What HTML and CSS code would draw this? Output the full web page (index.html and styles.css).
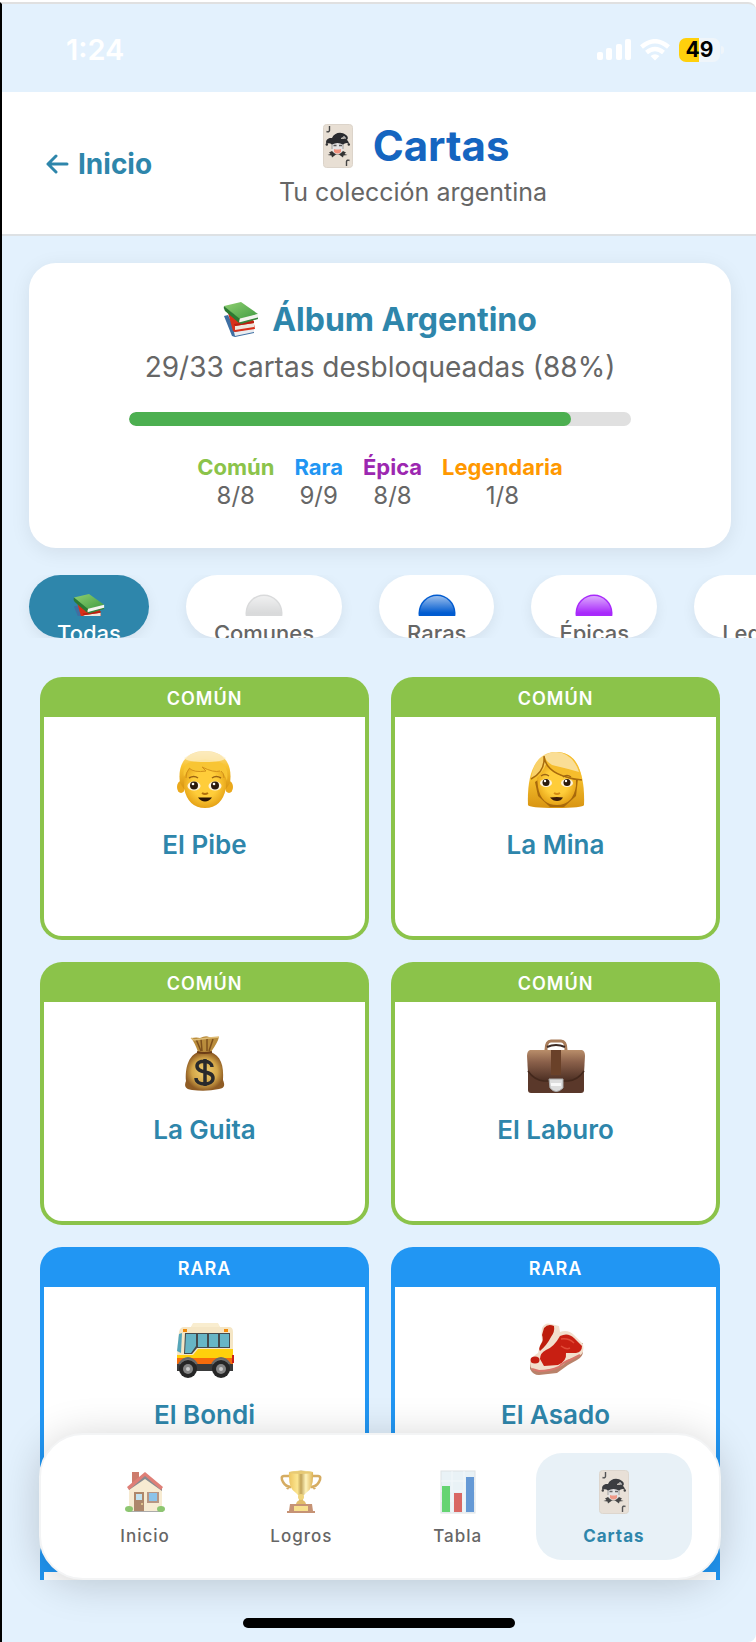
FILE: index.html
```html
<!DOCTYPE html>
<html lang="es">
<head>
    <meta charset="UTF-8">
    <meta name="viewport" content="width=device-width, initial-scale=1.0">
    <title>Cartas</title>
    <link rel="stylesheet" href="styles.css">
</head>
<body>
    <!-- iconos compartidos -->
    <svg class="sprite" aria-hidden="true">
        <defs>
            <linearGradient id="bookGreen" x1="0" y1="0" x2="1" y2="1">
                <stop offset="0" stop-color="#8fd070"/><stop offset="1" stop-color="#3f9a42"/>
            </linearGradient>
            <linearGradient id="dome" x1="0" y1="0" x2="0" y2="1">
                <stop offset="0" stop-color="#fff" stop-opacity=".6"/><stop offset=".5" stop-color="#fff" stop-opacity="0"/>
            </linearGradient>
        </defs>
        <symbol id="joker" viewBox="0 0 30 44">
            <rect x=".5" y=".5" width="29" height="43" rx="3" fill="#e8dfd4" stroke="#dcd4ca"/>
            <path d="M6.500 2v4.500q-.5 2-3 1" fill="none" stroke="#444" stroke-width="1.400"/>
            <path d="M23.500 42v-4.500q.5-2 3-1" fill="none" stroke="#444" stroke-width="1.400"/>
            <path d="M9 18h11v7q-1 5-5.500 5T9 25z" fill="#e4e2e3"/>
            <path d="M9 19v6M20 19v6" stroke="#999"/>
            <path d="M10.500 21.500h3M16 21.500h3" stroke="#555" stroke-width="1.300"/>
            <path d="M11 25q3.500 1 7 0v3q-3.500 3-7 0z" fill="#f0907c"/>
            <path d="M3.500 20C2 16 5 13.500 9 14c2-5 9-7 14-3 3 2 2 5.500-.5 5-1-.5-.5-2-1.500-2.500-2-.5-3 .5-3 1.500 5-1 8 2 8 5-2-1.500-4-1-6 .5q-5.500-3-11 0c-2-1.500-4-1.500-5.500-.5z" fill="#292a2e"/>
            <path d="M20.500 12.500q2 .5 2 2" stroke="#eee" fill="none"/>
            <circle cx="3.800" cy="20.500" r="1.200" fill="#333"/><circle cx="25.800" cy="20.500" r="1.200" fill="#333"/>
            <path d="M9 27l2 2q3.500 2.500 7 0l2-2 3 1.500-1.500 1.500 3 1-4 .5-.5 2-4-3h-3l-4 3-.5-2-4-.5 3-1L6 28.500z" fill="#333"/>
        </symbol>
        <symbol id="books" viewBox="0 0 36 36">
            <path d="M1 14l4-1 8 16 18-3v5l-19 4-3-1z" fill="#3e6fa3"/>
            <path d="M11 30l20-4v4l-19 4z" fill="#e9edf1"/>
            <path d="M5 11l9 5 16 1 2 10-20 3-2-1z" fill="#d9301a"/>
            <path d="M12 24l19-3v4l-19 3z" fill="#efe6dc"/>
            <path d="M11 22l20-3v2l-19 3z" fill="#b91f10"/>
            <path d="M1 4l17-4 17 12-18 6z" fill="url(#bookGreen)"/>
            <path d="M1 4l16 13-1 4L2 9Q0 6 1 4z" fill="#2c7a31"/>
            <path d="M17 16.500q-1.500 3 0 4.500l18-5v-4z" fill="#f4f4f0"/>
            <path d="M16 20.500l19-5v1.500l-17 5z" fill="#33853a"/>
        </symbol>
    </svg>

    <div class="screen">
        <div class="status-bar">
            <span class="time">1:24</span>
            <div class="status-icons">
                <svg width="34" height="22" viewBox="0 0 34 22" fill="#fff">
                    <rect x="0" y="13" width="6" height="8" rx="2"/>
                    <rect x="9" y="9" width="6" height="12" rx="2"/>
                    <rect x="19" y="5" width="6" height="16" rx="2"/>
                    <rect x="28" y="0" width="6" height="21" rx="2"/>
                </svg>
                <svg width="30" height="22" viewBox="0 0 30 22" fill="none" stroke="#fff" stroke-width="4.500">
                    <path d="M1.500 8q13.500-11.500 27 0"/>
                    <path d="M6.500 13.500q8.500-7 17 0"/>
                    <path d="M10.500 17q4.500-3.500 9 0L15 21.500z" fill="#fff" stroke="none"/>
                </svg>
                <div class="battery">49</div>
            </div>
        </div>

        <header class="page-header">
            <a class="back" href="#">
                <svg width="23" height="20" viewBox="0 0 23 20" fill="none" stroke="currentColor" stroke-width="3" stroke-linecap="round" stroke-linejoin="round">
                    <path d="M21 10H2M10 2L2 10l8 8"/>
                </svg>
                Inicio
            </a>
            <div class="page-title">
                <h1><svg width="42" height="44"><use href="#joker"/></svg>Cartas</h1>
                <p>Tu colección argentina</p>
            </div>
        </header>

        <div class="content">
            <main class="scroll">
                <section class="album">
                    <h2><svg width="36" height="36"><use href="#books"/></svg>Álbum Argentino</h2>
                    <p class="album-count">29/33 cartas desbloqueadas (88%)</p>
                    <div class="progress"><div class="progress-fill" style="width: 88%"></div></div>
                    <ul class="stats">
                        <li><b class="t-comun">Común</b>8/8</li>
                        <li><b class="t-rara">Rara</b>9/9</li>
                        <li><b class="t-epica">Épica</b>8/8</li>
                        <li><b class="t-legendaria">Legendaria</b>1/8</li>
                    </ul>
                </section>

                <div class="filters">
                    <button class="filter active" type="button">
                        <span class="filter-icon"><svg width="32" height="32"><use href="#books"/></svg></span>Todas
                    </button>
                    <button class="filter" type="button">
                        <span class="filter-icon"><svg width="38" height="38" viewBox="0 0 38 38"><circle cx="19" cy="19" r="18.500" fill="#d9dadb"/><circle cx="19" cy="19" r="17" fill="url(#dome)"/></svg></span>Comunes
                    </button>
                    <button class="filter" type="button">
                        <span class="filter-icon"><svg width="38" height="38" viewBox="0 0 38 38"><circle cx="19" cy="19" r="18.500" fill="#005bd0"/><circle cx="19" cy="19" r="17" fill="url(#dome)"/></svg></span>Raras
                    </button>
                    <button class="filter" type="button">
                        <span class="filter-icon"><svg width="38" height="38" viewBox="0 0 38 38"><circle cx="19" cy="19" r="18.500" fill="#a829fb"/><circle cx="19" cy="19" r="17" fill="url(#dome)"/></svg></span>Épicas
                    </button>
                    <button class="filter" type="button">
                        <span class="filter-icon"><svg width="38" height="38" viewBox="0 0 38 38"><circle cx="19" cy="19" r="18.500" fill="#f5b50a"/><circle cx="19" cy="19" r="17" fill="url(#dome)"/></svg></span>Legendarias
                    </button>
                </div>

                <div class="cards">
                    <article class="card">
                        <div class="rarity">COMÚN</div>
                        <div class="card-body">
                            <svg class="card-icon" viewBox="0 0 58 58">
                                <defs>
                                    <radialGradient id="skin" cx=".5" cy=".45" r=".6"><stop offset=".5" stop-color="#ffcd3a"/><stop offset="1" stop-color="#e09a10"/></radialGradient>
                                    <linearGradient id="hair" x1="0" y1="0" x2="0" y2="1"><stop offset="0" stop-color="#f7dd98"/><stop offset=".4" stop-color="#f9c430"/><stop offset="1" stop-color="#d89412"/></linearGradient>
                                </defs>
                                <ellipse cx="5" cy="37" rx="4" ry="6" fill="#eba91c"/><ellipse cx="53" cy="37" rx="4" ry="6" fill="#eba91c"/>
                                <path d="M4 33C1 13 11 1 29 1s28 12 25 32l-4 6H8z" fill="url(#hair)"/>
                                <path d="M8 24Q10 12 29 14q19-2 21 10v14Q46 58 29 58T8 38z" fill="url(#skin)"/>
                                <path d="M8 27q2-4 5-9 5 5 17 3l-4-4q12 6 18 4 5 3 7 10 2-13-5-18-17-7-34 0-6 5-4 14z" fill="#f8c534"/>
                                <path d="M13 18q5 5 17 3l-4-4q12 6 18 4M10 28q0-6 3-9M48 28q0-5-3-7" fill="none" stroke="#d3921a"/>
                                <path d="M8 8Q29-6 50 8q-3 4-21 4T8 8z" fill="#fdf1cf" opacity=".7"/>
                                <path d="M13 28q5-3 9 0M36 28q4-3 9 0" fill="none" stroke="#9c6514" stroke-width="1.500"/>
                                <ellipse cx="18" cy="36" rx="6.500" ry="4.500" fill="#fff3dc"/><ellipse cx="39" cy="36" rx="6.500" ry="4.500" fill="#fff3dc"/>
                                <circle cx="18" cy="35.500" r="4" fill="#2b1a0b"/><circle cx="39" cy="35.500" r="4" fill="#2b1a0b"/>
                                <circle cx="17" cy="34" r="1.300" fill="#fff"/><circle cx="38" cy="34" r="1.300" fill="#fff"/>
                                <path d="M26 43q3 2 6 0" fill="none" stroke="#b06f0c" stroke-width="2"/>
                                <path d="M22 47.500h14q-3 4-7 4t-7-4z" fill="#2a1405"/>
                            </svg>
                            <h3>El Pibe</h3>
                        </div>
                    </article>
                    <article class="card">
                        <div class="rarity">COMÚN</div>
                        <div class="card-body">
                            <svg class="card-icon" viewBox="0 0 58 58">
                                <path d="M1 55C0 30 5 2 29 2s29 28 28 53q-1 3-28 3T1 55z" fill="url(#hair)"/>
                                <path d="M8 32l3 14 12 11h14l12-11 2-17-22-12z" fill="#a8690b"/>
                                <path d="M10 28Q16 22 19 14q9 12 30 16v6Q46 55 30 55T11 37z" fill="url(#skin)"/>
                                <path d="M17 6q1 20 38 24Q51 2 29 2 22 2 17 6z" fill="#f6bd2c"/>
                                <path d="M17 6q4 9 12 10 13 3 23 6Q46 3 29 2 22 2 17 6z" fill="#fbe9ba" opacity=".75"/>
                                <path d="M17 6q1 17-13 23Q7 10 17 6z" fill="#f9d168"/>
                                <path d="M17 6q2 20 38 24M17 7q1 15-13 22" fill="none" stroke="#a96b0c" stroke-width="1.500"/>
                                <path d="M14 26q4-3 8 0M36 27q4-3 8 0" fill="none" stroke="#9c6514" stroke-width="1.300"/>
                                <ellipse cx="19" cy="33" rx="6" ry="4" fill="#fff3dc"/><ellipse cx="40" cy="33" rx="6" ry="4" fill="#fff3dc"/>
                                <circle cx="19" cy="32.500" r="3.500" fill="#2b1a0b"/><circle cx="40" cy="32.500" r="3.500" fill="#2b1a0b"/>
                                <circle cx="18" cy="31" r="1.200" fill="#fff"/><circle cx="39" cy="31" r="1.200" fill="#fff"/>
                                <path d="M27 43q3 2 6 0" fill="none" stroke="#d48b13" stroke-width="2"/>
                                <path d="M23 47.500q7-1 13 0-2 3.500-6 3.500t-7-3.500z" fill="#3d1c08"/>
                            </svg>
                            <h3>La Mina</h3>
                        </div>
                    </article>
                    <article class="card">
                        <div class="rarity">COMÚN</div>
                        <div class="card-body">
                            <svg class="card-icon" viewBox="0 0 58 58">
                                <defs><radialGradient id="bag"><stop offset="0" stop-color="#f1d070"/><stop offset=".65" stop-color="#d3a649"/><stop offset="1" stop-color="#8f5c24"/></radialGradient></defs>
                                <path d="M23 17C12 20 9 34 10 46c-2 5-1 8 6 9q14 2 27-1c6-1 6-4 4-9 1-14-2-25-13-28z" fill="url(#bag)"/>
                                <path d="M15 3q6-1 9 0 6-3 9-1 5 1 10 0-1 5-8 15H22Q19 8 15 3z" fill="#b98c3c"/>
                                <path d="M20 4l5 12M25 4l1 12M31 3v13M37 4l-4 12" stroke="#7d501d" stroke-width="1.500"/>
                                <path d="M15 3l3 2 7-1 8-1 10-1" fill="none" stroke="#dfbd78" stroke-width="1.500"/>
                                <path d="M21 17q7 2 15 0" fill="none" stroke="#6b3c16" stroke-width="2"/>
                                <path d="M36 32c0-7-15-8-15-1 0 8 16 4 16 12 0 8-17 8-17 0M29 24v27" fill="none" stroke="#292a2c" stroke-width="3.500"/>
                            </svg>
                            <h3>La Guita</h3>
                        </div>
                    </article>
                    <article class="card">
                        <div class="rarity">COMÚN</div>
                        <div class="card-body">
                            <svg class="card-icon" viewBox="0 0 58 58">
                                <defs><linearGradient id="leather" x1="0" y1="0" x2="0" y2="1"><stop offset="0" stop-color="#b98e6a"/><stop offset=".4" stop-color="#8a604a"/><stop offset="1" stop-color="#4f3125"/></linearGradient></defs>
                                <path d="M19 15q0-9 5-9h10q5 0 5 9" fill="none" stroke="#a87c5a" stroke-width="3"/>
                                <path d="M20 12q9-4 18 0" fill="none" stroke="#3b2a24" stroke-width="2"/>
                                <rect x="1" y="20" width="56" height="38" rx="3" fill="#5a382a"/>
                                <path d="M3 15h52q3 1 3 6l-1 17q-6 6-15 7H16Q7 44 1 38L0 21q0-5 3-6z" fill="url(#leather)"/>
                                <path d="M1 36q6 9 16 10h24q10-1 16-10" fill="none" stroke="#43281c" stroke-width="1.500"/>
                                <rect x="24" y="15" width="10" height="25" fill="#6a4129"/>
                                <path d="M22 44h14v9q-7 7-13 0z" fill="#ddd" stroke="#aaa"/>
                                <path d="M24 48h10v3H24z" fill="#f8f8f8"/>
                            </svg>
                            <h3>El Laburo</h3>
                        </div>
                    </article>
                    <article class="card rara">
                        <div class="rarity">RARA</div>
                        <div class="card-body">
                            <svg class="card-icon" viewBox="0 0 58 58">
                                <path d="M15 7l2-3h25l2 3h9q4 0 4 5v36H1V35L3 12q1-5 5-5z" fill="#f5e6c5"/>
                                <path d="M17 3h25l2 4H15z" fill="#f9edcf"/>
                                <rect x="7" y="9" width="4" height="3" fill="#f18b0a"/><rect x="48" y="9" width="4" height="3" fill="#f18b0a"/>
                                <path d="M3 14l3-1-1 20-4-2z" fill="#55a5b9"/>
                                <path d="M9 13h45v15H21l-5 6H8z" fill="#454a4c"/>
                                <path d="M10 14h10v12l-5 7H9zM22 14h9v13h-9zM33 14h9v13h-9zM44 14h9v13h-9z" fill="#67b5c5"/>
                                <path d="M1 35h16l5-6h35v11H1z" fill="#ffd00c"/>
                                <path d="M1 38h56v6H1z" fill="#f66b0b"/>
                                <path d="M1 44h56v7H1z" fill="#3a3b3c"/>
                                <path d="M3 44q9-12 18 0M36 44q9-12 18 0" fill="#777" stroke="#696969" stroke-width="2"/>
                                <circle cx="12" cy="49" r="9" fill="#262626"/><circle cx="45" cy="49" r="9" fill="#262626"/>
                                <circle cx="12" cy="49" r="5" fill="#858585"/><circle cx="45" cy="49" r="5" fill="#858585"/>
                                <circle cx="12" cy="49" r="2" fill="#ccc"/><circle cx="45" cy="49" r="2" fill="#ccc"/>
                                <path d="M56 35h2v8h-2z" fill="#c8201a"/>
                            </svg>
                            <h3>El Bondi</h3>
                        </div>
                    </article>
                    <article class="card rara">
                        <div class="rarity">RARA</div>
                        <div class="card-body">
                            <svg class="card-icon" viewBox="0 0 58 58">
                                <path d="M3 42l0 7q3 6 9 6l18-2 11-8 9-5q6-3 6-9v-8z" fill="#b9826a"/>
                                <path d="M15 8q3-6 9-4l8 2 1 6q8-3 14 3l9 9q2 9-4 12l-12 4q-5 8-14 9l-14 2q-9 0-9-8 1-6 8-10 2-8 4-12-1-8 0-13z" fill="#f2dfcd"/>
                                <path d="M17 8q4-5 10-2 1 6-3 11-4 8-11 14-2-2 1-7 3-4 1-9z" fill="#bd1d0c"/>
                                <path d="M33 16q8-4 14 2l8 8q0 6-6 7l-10 0q1 8-8 12l-14 1-4-7q0-6 6-9 8-3 14-14z" fill="#c81f12"/>
                                <ellipse cx="8" cy="40" rx="4.500" ry="3.500" fill="#c51e12"/>
                                <path d="M5 49l7 2q11 0 20-4 4-5 11-7l10-5" fill="none" stroke="#d8776c" stroke-width="2"/>
                                <path d="M34 19q8-1 13 4M34 26q5 4 9 2" fill="none" stroke="#e14b38" stroke-width="1.500"/>
                            </svg>
                            <h3>El Asado</h3>
                        </div>
                    </article>
                    <article class="card rara"><div class="rarity">RARA</div><div class="card-body"></div></article>
                    <article class="card rara"><div class="rarity">RARA</div><div class="card-body"></div></article>
                </div>
            </main>

            <nav class="tab-bar">
                <a class="tab" href="#">
                    <svg width="44" height="44" viewBox="0 0 44 44">
                        <path d="M9 2h7v13H9z" fill="#b9462f"/>
                        <path d="M6 17L22 4l17 14v24H6z" fill="#f5e3bf"/>
                        <path d="M6 17L22 5l17 13v3L22 9 6 20z" fill="#565a60"/>
                        <path d="M4 17L22 2l18 15-2 3L22 6 6 20z" fill="#d24a3e"/>
                        <rect x="11" y="22" width="10" height="19" fill="#8b552d"/><rect x="13" y="24" width="6" height="6" fill="#a8d6ea"/><circle cx="19" cy="34" r="1" fill="#e8c66c"/>
                        <rect x="24" y="22" width="12" height="11" fill="#9a6a51"/><rect x="26" y="23" width="8" height="8" fill="#5cabe0"/>
                        <path d="M5 41h35v1H5z" fill="#888"/>
                        <ellipse cx="6" cy="39" rx="4" ry="3" fill="#5daf35"/><ellipse cx="38" cy="39" rx="4" ry="3" fill="#5daf35"/>
                    </svg>
                    Inicio
                </a>
                <a class="tab" href="#">
                    <svg width="44" height="44" viewBox="0 0 44 44">
                        <defs><linearGradient id="gold"><stop offset="0" stop-color="#e5ad20"/><stop offset=".35" stop-color="#fbdc62"/><stop offset=".5" stop-color="#a87c12"/><stop offset=".7" stop-color="#fff0a1"/><stop offset="1" stop-color="#cf930d"/></linearGradient></defs>
                        <path d="M12 6H5q-4 0-1 6 3 5 8 5M32 6h7q4 0 1 6-3 5-8 5M10 16l-2 3M34 16l2 3" fill="none" stroke="#c48a20" stroke-width="2.500"/>
                        <path d="M10 2q12-3 24 0 1 17-7 21l-3 3v8h-4v-8l-3-3Q9 19 10 2z" fill="url(#gold)"/>
                        <ellipse cx="22" cy="2.500" rx="12" ry="1.500" fill="#ddb43c"/>
                        <circle cx="22" cy="27" r="3" fill="#eac344"/>
                        <path d="M17 34q1-4 5-4t5 4z" fill="#d7a22b"/>
                        <path d="M11 34h22l1 7h2v2H8v-2h2z" fill="#af663b"/>
                        <path d="M15 36h14v5H15z" fill="#f4d45d"/>
                    </svg>
                    Logros
                </a>
                <a class="tab" href="#">
                    <svg width="44" height="44" viewBox="0 0 44 44">
                        <rect x="5" y="1" width="34" height="42" fill="#e1edf3" stroke="#d0d7da"/>
                        <path d="M5 11h34M5 21h34M5 31h34M16 1v42M28 1v42" stroke="#edf5f9"/>
                        <rect x="6" y="16" width="8" height="26" fill="#25c337"/><rect x="18" y="23" width="8" height="19" fill="#c92923"/><rect x="30" y="7" width="8" height="35" fill="#246fc4"/>
                    </svg>
                    Tabla
                </a>
                <a class="tab active" href="#">
                    <svg width="44" height="44"><use href="#joker"/></svg>
                    Cartas
                </a>
            </nav>
        </div>

        <div class="home-area"><div class="home-indicator"></div></div>
    </div>
</body>
</html>
```

FILE: styles.css
```css
* {
    box-sizing: border-box;
    margin: 0;
    padding: 0;
}
body {
    height: 100vh;
    padding-top: 2px;
    background: #fff;
    color: #666;
    font-family: Inter, "Liberation Sans", sans-serif;
}
a {
    color: inherit;
    text-decoration: none;
}
svg {
    flex-shrink: 0;
}
.sprite {
    position: absolute;
    width: 0;
    height: 0;
}
.screen {
    display: flex;
    flex-direction: column;
    height: 100%;
    border-top: 2px solid #e0e0e0;
    border-left: 2px solid #000;
    border-radius: 0 8px 8px 0;
    background: #e3f1fd;
    overflow: hidden;
}

/* barra de estado */
.status-bar {
    display: flex;
    flex-shrink: 0;
    justify-content: space-between;
    align-items: center;
    height: 88px;
    padding: 4px 36px 0 64px;
    color: #fff;
}
.time {
    font-size: 29px;
    font-weight: 600;
    line-height: 32px;
}
.status-icons {
    display: flex;
    align-items: center;
    gap: 9px;
}
.battery {
    position: relative;
    width: 41px;
    border-radius: 7px;
    background: linear-gradient(90deg, #ffd00c 50%, #eff5fa 50%);
    color: #000;
    font-size: 21px;
    font-weight: 700;
    line-height: 24px;
    text-align: center;
}
.battery::after {
    content: '';
    position: absolute;
    top: 8px;
    right: -4px;
    width: 3px;
    height: 8px;
    border-radius: 0 3px 3px 0;
    background: #eff5fa;
}

/* cabecera */
.page-header {
    display: flex;
    flex-shrink: 0;
    align-items: center;
    padding: 28px 46px 26px 44px;
    border-bottom: 2px solid #dde1e4;
    background: #fff;
}
.back {
    display: flex;
    align-items: center;
    gap: 9px;
    color: #2e86ab;
    font-size: 28px;
    font-weight: 700;
    line-height: 32px;
}
.page-title {
    flex: 1;
    padding-right: 36px;
    text-align: center;
}
.page-title h1 {
    display: flex;
    justify-content: center;
    align-items: center;
    gap: 14px;
    color: #1565c0;
    font-size: 42px;
    font-weight: 700;
    line-height: 52px;
}
.page-title p {
    margin-top: 4px;
    font-size: 25px;
    line-height: 32px;
}

/* contenido */
.content {
    position: relative;
    flex: 1;
    min-height: 0;
}
.scroll {
    height: 100%;
    padding: 27px 25px 0 27px;
    overflow-y: auto;
    scrollbar-width: none;
}
.album {
    padding: 37px 100px;
    border-radius: 27px;
    background: #fff;
    box-shadow: 0 4px 20px rgba(0, 0, 0, .08);
    text-align: center;
}
.album h2 {
    display: flex;
    justify-content: center;
    align-items: center;
    gap: 13px;
    color: #2e86ab;
    font-size: 32px;
    font-weight: 700;
    line-height: 40px;
    white-space: nowrap;
}
.album-count {
    margin-top: 9px;
    font-size: 28px;
    line-height: 36px;
    white-space: nowrap;
}
.progress {
    height: 14px;
    margin: 27px 0;
    border-radius: 7px;
    background: #e0e0e0;
    overflow: hidden;
}
.progress-fill {
    height: 100%;
    border-radius: 7px;
    background: #4caf50;
}
.stats {
    display: flex;
    justify-content: center;
    gap: 20px;
    list-style: none;
    font-size: 24px;
    line-height: 30px;
}
.stats b {
    display: block;
    font-size: 22px;
    font-weight: 700;
    line-height: 28px;
}
.t-comun { color: #8bc34a; }
.t-rara { color: #2196f3; }
.t-epica { color: #9c27b0; }
.t-legendaria { color: #ff9800; }

/* filtros */
.filters {
    display: flex;
    gap: 37px;
    height: 63px;
    margin: 27px -25px 0 -27px;
    padding: 0 27px;
    overflow-x: auto;
    overflow-y: hidden;
    scrollbar-width: none;
}
.filter {
    display: flex;
    flex-direction: column;
    flex-shrink: 0;
    align-items: center;
    height: 63px;
    padding: 19px 28px 0;
    border: 0;
    border-radius: 32px;
    background: #fff;
    box-shadow: 0 4px 14px rgba(0, 0, 0, .07);
    color: #666;
    font: 500 22px/28px Inter, "Liberation Sans", sans-serif;
    overflow: hidden;
}
.filter.active {
    background: #2e86ab;
    color: #fff;
}
.filter-icon {
    flex-shrink: 0;
    height: 22px;
    margin-bottom: 3px;
    overflow: hidden;
}

/* cartas */
.cards {
    display: grid;
    grid-template-columns: 1fr 1fr;
    gap: 22px;
    padding: 39px 11px 0;
}
.card {
    display: flex;
    flex-direction: column;
    height: 263px;
    padding: 4px;
    border-radius: 22px;
    background: #8bc34a;
}
.card.rara {
    background: #2196f3;
}
.rarity {
    color: #fff;
    font-size: 18px;
    font-weight: 600;
    line-height: 36px;
    letter-spacing: 1px;
    text-align: center;
}
.card-body {
    display: flex;
    flex: 1;
    flex-direction: column;
    align-items: center;
    border-radius: 0 0 18px 18px;
    background: #fff;
}
.card-icon {
    width: 58px;
    height: 58px;
    margin: 33px 0 21px;
}
.card h3 {
    color: #2e86ab;
    font-size: 26px;
    font-weight: 600;
    line-height: 32px;
}

/* navegación inferior, flota sobre el contenido */
.tab-bar {
    position: absolute;
    right: 35px;
    bottom: 0;
    left: 37px;
    display: grid;
    grid-template-columns: repeat(4, 1fr);
    padding: 18px 27px 18px 26px;
    border: 2px solid #f3f4f5;
    border-radius: 44px;
    background: #fff;
    box-shadow: 0 4px 40px rgba(0, 0, 0, .18);
}
.tab {
    display: flex;
    flex-direction: column;
    align-items: center;
    gap: 9px;
    padding: 17px 0 11px;
    border-radius: 26px;
    font-size: 17px;
    font-weight: 500;
    line-height: 26px;
    letter-spacing: 1px;
}
.tab svg {
    opacity: .7;
}
.tab.active {
    background: #e8f1f7;
    color: #2e86ab;
    font-weight: 700;
}
.tab.active svg {
    opacity: .9;
}

.home-area {
    flex-shrink: 0;
    height: 62px;
    padding-top: 38px;
}
.home-indicator {
    width: 36%;
    height: 10px;
    margin: 0 auto;
    border-radius: 5px;
    background: #000;
}
```
